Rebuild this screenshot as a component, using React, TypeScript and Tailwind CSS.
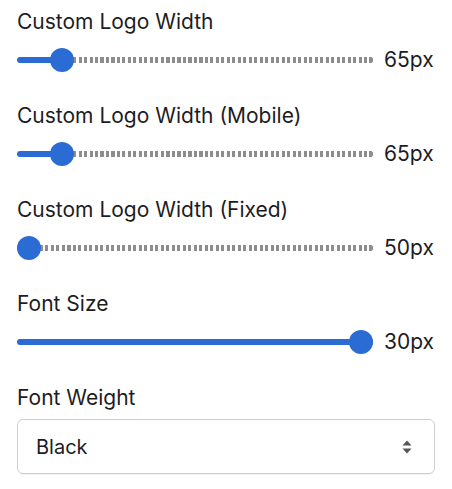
const font = "font-['Inter','Liberation_Sans',sans-serif]";

type SliderProps = { label: string; value: number; min: number; max: number };

function RangeRow({ label, value, min, max }: SliderProps) {
  const frac = (value - min) / (max - min);
  return (
    <div className="flex flex-col gap-[14px] mb-8">
      <div className="text-[21px] leading-6 text-[#1d1d1f]">{label}</div>
      <div className="flex items-center gap-[11px] h-6">
        <div className="flex flex-1 items-center h-6">
          <div
            className="h-[6px] rounded-l-full bg-[#2b6cd4] -mr-3"
            style={{ width: `calc((100% - 24px) * ${frac} + 12px)` }}
          />
          <div className="relative w-6 h-6 shrink-0 rounded-full bg-[#2b6cd4]" />
          <div className="flex-1 h-[6px] -ml-px rounded-r-full bg-[repeating-linear-gradient(90deg,#8d8d8d_0_3px,transparent_3px_5.5px)]" />
          <div className="w-[4px] h-[6px] -ml-[4px] rounded-r-full bg-[#8d8d8d]" />
        </div>
        <span className="w-[51px] text-[21px] leading-6 text-[#1d1d1f]">{value}px</span>
      </div>
    </div>
  );
}

export default function App() {
  return (
    <div className={`w-[452px] h-[489px] bg-white pt-[10px] px-[17px] ${font}`}>
      <RangeRow label="Custom Logo Width" value={65} min={50} max={200} />
      <RangeRow label="Custom Logo Width (Mobile)" value={65} min={50} max={200} />
      <RangeRow label="Custom Logo Width (Fixed)" value={50} min={50} max={200} />
      <RangeRow label="Font Size" value={30} min={10} max={30} />
      <div className="flex flex-col gap-[9px]">
        <div className="text-[21px] leading-6 text-[#1d1d1f]">Font Weight</div>
        <div className="flex items-center justify-between h-[55px] border border-[#cfcfcf] rounded-md pl-[18px] pr-[22px] shadow-[0_1px_1px_rgba(0,0,0,0.05)]">
          <span className="text-[20px] text-[#1d1d1f]">Black</span>
          <svg width="10" height="14" viewBox="0 0 10 14" className="text-[#555]">
            <path d="M5 0.5 L9.5 5.5 H0.5 Z" fill="currentColor" />
            <path d="M5 13.5 L9.5 8.5 H0.5 Z" fill="currentColor" />
          </svg>
        </div>
      </div>
    </div>
  );
}
